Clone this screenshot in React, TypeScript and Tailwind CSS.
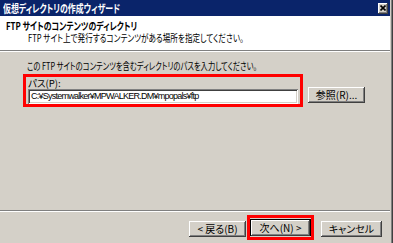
import React from 'react';

const jp = "font-['Noto_Sans_CJK_JP','Noto_Sans_CJK_SC',sans-serif] [font-feature-settings:'palt']";

const raised =
  'bg-[#d4d0c8] shadow-[inset_-1px_-1px_#404040,inset_1px_1px_#ffffff,inset_-2px_-2px_#808080,inset_2px_2px_#d4d0c8]';

function Button({ label, className = '' }: { label: string; className?: string }) {
  return (
    <div
      className={`${raised} flex h-[16px] items-center justify-center text-[10px] leading-none text-black ${className}`}
    >
      {label}
    </div>
  );
}

function Etched() {
  return (
    <div className="flex flex-col">
      <div className="h-px bg-[#808080]" />
      <div className="h-px bg-white" />
    </div>
  );
}

export default function App() {
  return (
    <div className={`flex h-[243px] w-[393px] overflow-hidden bg-[#d4d0c8] ${jp}`}>
      <div className="flex w-[390px] flex-col">
        {/* title bar */}
        <div className="flex h-[16px] items-center justify-between bg-[#0a246a] pl-[3px] pr-[2px]">
          <span className="inline-block origin-left scale-x-[0.72] whitespace-nowrap text-[11px] font-bold leading-none text-white">
            仮想ディレクトリの作成ウィザード
          </span>
          <div className={`${raised} flex h-[11px] w-[10px] items-center justify-center`}>
            <svg width="6" height="6" viewBox="0 0 6 6">
              <path d="M0.5 0.5 L5.5 5.5 M5.5 0.5 L0.5 5.5" stroke="#000" strokeWidth="1.6" />
            </svg>
          </div>
        </div>

        {/* header */}
        <div className="flex h-[34px] flex-col items-start bg-white pl-[6px] pt-[4px]">
          <div className="origin-left scale-x-[0.75] whitespace-nowrap text-[10.5px] font-bold leading-[11px] text-black">
            FTP サイトのコンテンツのディレクトリ
          </div>
          <div className="mt-[1px] pl-[22px]">
            <div className="origin-left scale-x-[0.76] whitespace-nowrap text-[10px] leading-[11px] text-black">
              FTP サイト上で発行するコンテンツがある場所を指定してください。
            </div>
          </div>
        </div>
        <Etched />

        {/* body */}
        <div className="flex flex-1 flex-col pl-[23px] pt-[8px]">
          <div className="pl-[4px]">
            <div className="origin-left scale-x-[0.73] whitespace-nowrap text-[10px] leading-[12px] text-black">
              この FTP サイトのコンテンツを含むディレクトリのパスを入力してください。
            </div>
          </div>
          <div className="mt-[2px] flex items-end">
            <div className="flex h-[33px] w-[280px] flex-col border-[3px] border-[#ff0000] pl-[2px] pt-[1px]">
              <div className="h-[11px] text-[9.5px] leading-[10px] text-black">パス(P):</div>
              <div className="flex h-[16px] w-[270px] items-center bg-white pl-[3px] font-['Liberation_Sans',sans-serif] text-[9px] leading-none tracking-[-0.75px] text-black shadow-[inset_1px_1px_#808080,inset_-1px_-1px_#ffffff,inset_2px_2px_#404040,inset_-2px_-2px_#d4d0c8]">
                C:¥Systemwalker¥MPWALKER.DM¥mpopals¥ftp
              </div>
            </div>
            <Button label="参照(R)..." className="mb-[4px] ml-[5px] w-[57px]" />
          </div>
        </div>

        <Etched />
        {/* footer buttons */}
        <div className="flex h-[31px] items-start pl-[189px] pt-[3px]">
          <Button label="< 戻る(B)" className="mt-[6px] w-[57px]" />
          <div className="ml-px flex h-[25px] w-[67px] items-center justify-center border-[3px] border-[#ff0000]">
            <div className="flex h-[17px] w-[61px] items-center justify-center border border-black">
              <Button label="次へ(N) >" className="h-[15px] w-[59px]" />
            </div>
          </div>
          <Button label="キャンセル" className="ml-[7px] mt-[6px] w-[61px]" />
        </div>
      </div>
      {/* right frame */}
      <div className="flex w-[3px]">
        <div className="w-px bg-[#d4d0c8]" />
        <div className="w-px bg-[#808080]" />
        <div className="w-px bg-[#404040]" />
      </div>
    </div>
  );
}
